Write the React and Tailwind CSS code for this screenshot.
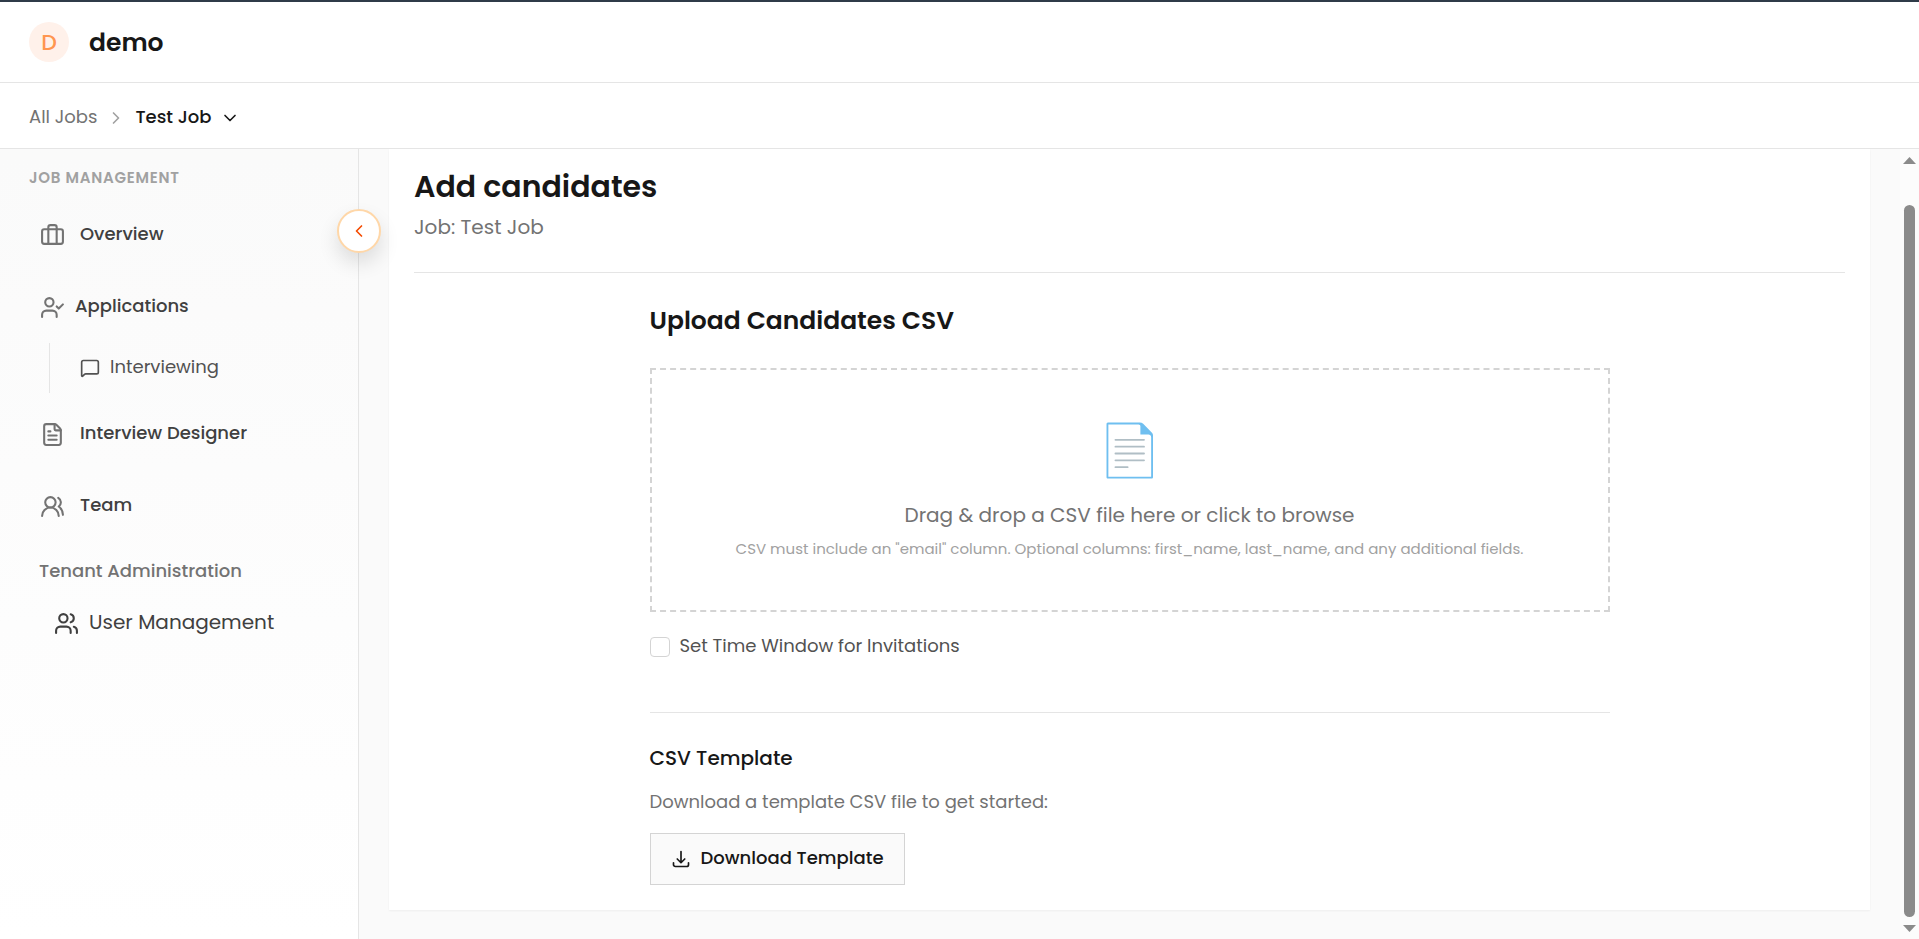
import {
  ChevronDown,
  ChevronLeft,
  ChevronRight,
  FileText,
  MessageSquare,
  UserCheck,
  Users,
  UsersRound,
} from "lucide-react";

function BriefcaseIcon() {
  return (
    <svg
      className="size-[25px] shrink-0 text-neutral-500"
      viewBox="0 0 24 24"
      fill="none"
      stroke="currentColor"
      strokeWidth="2"
      strokeLinecap="round"
      strokeLinejoin="round"
      aria-hidden="true"
    >
      <rect x="2" y="6" width="20" height="14" rx="2" />
      <path d="M16 20V4a2 2 0 0 0-2-2h-4a2 2 0 0 0-2 2v16" />
    </svg>
  );
}

function DownloadIcon() {
  return (
    <svg
      className="size-5 shrink-0"
      viewBox="0 0 24 24"
      fill="none"
      stroke="currentColor"
      strokeWidth="2"
      strokeLinecap="round"
      strokeLinejoin="round"
      aria-hidden="true"
    >
      <path d="M3 16.5v2.25A2.25 2.25 0 0 0 5.25 21h13.5A2.25 2.25 0 0 0 21 18.75V16.5M16.5 12 12 16.5m0 0L7.5 12m4.5 4.5V3" />
    </svg>
  );
}

function NavRow({ icon, children, className = "gap-[15px]" }) {
  return (
    <a href="#" className={`flex h-[52px] items-center pl-10 text-[18px] font-medium text-neutral-700 ${className}`}>
      {icon}
      <span className="pb-1">{children}</span>
    </a>
  );
}

const navIcon = "size-[25px] shrink-0 text-neutral-500";

function Header() {
  return (
    <header className="flex h-[81px] shrink-0 items-center gap-5 border-b border-neutral-200 bg-white px-[29px]">
      <div className="flex size-10 items-center justify-center rounded-full bg-[#fff1ea] text-[22px] font-medium text-[#ff9650]">
        D
      </div>
      <span className="pt-0.5 text-[25px] leading-8 font-semibold">demo</span>
    </header>
  );
}

function Breadcrumb() {
  return (
    <nav
      aria-label="Breadcrumb"
      className="flex h-[66px] shrink-0 items-center gap-[9px] border-b border-neutral-200 bg-white px-[29px] pt-1 text-[18px]"
    >
      <a href="#" className="pb-0.5 text-neutral-500">
        All Jobs
      </a>
      <ChevronRight className="size-5 text-neutral-400" strokeWidth={2} />
      <button type="button" className="flex items-center gap-2 font-medium">
        <span className="pb-0.5">Test Job</span>
        <ChevronDown className="size-5" strokeWidth={2} />
      </button>
    </nav>
  );
}

function Sidebar() {
  return (
    <aside className="relative z-10 w-[359px] shrink-0 border-r border-neutral-200 bg-linear-to-b from-neutral-50 to-white pt-[17px]">
      <h2 className="pl-[29px] text-[15px] leading-6 font-semibold tracking-wider text-neutral-400 uppercase">
        Job Management
      </h2>
      <nav aria-label="Job management" className="mt-[19px] flex flex-col gap-5">
        <NavRow icon={<BriefcaseIcon />}>Overview</NavRow>
        <div>
          <NavRow className="gap-[10px]" icon={<UserCheck className={navIcon} strokeWidth={2} />}>
            Applications
          </NavRow>
          <div className="mt-2.5 -mb-[5px] ml-[49px] border-l border-neutral-200">
            <a href="#" className="flex h-[50px] items-center gap-2.5 pl-[30px] text-[18px] text-neutral-600">
              <MessageSquare className="size-5" strokeWidth={2} />
              <span className="pb-1">Interviewing</span>
            </a>
          </div>
        </div>
        <NavRow icon={<FileText className={navIcon} strokeWidth={2} />}>Interview Designer</NavRow>
        <NavRow icon={<UsersRound className={navIcon} strokeWidth={2} />}>Team</NavRow>
      </nav>
      <h2 className="mt-[25px] pl-[39px] text-[18px] leading-7 font-medium text-neutral-500">
        Tenant Administration
      </h2>
      <nav aria-label="Tenant administration" className="mt-[14px]">
        <a href="#" className="flex h-12 items-center gap-[10px] pl-[54px] text-[20px] text-neutral-700">
          <Users className="size-[25px]" strokeWidth={2} />
          <span className="pb-0.5">User Management</span>
        </a>
      </nav>
      <button
        type="button"
        aria-label="Collapse sidebar"
        className="absolute top-[60px] -right-[23px] flex size-11 items-center justify-center rounded-full border-2 border-orange-200 bg-white text-orange-600 shadow-[0_10px_20px_rgba(0,0,0,0.12)]"
      >
        <ChevronLeft className="size-5" strokeWidth={2} />
      </button>
    </aside>
  );
}

function UploadSection() {
  return (
    <section className="mx-auto mt-7 max-w-[960px]">
      <h2 className="text-[25px] leading-10 font-semibold">Upload Candidates CSV</h2>
      <label className="mt-[27px] flex cursor-pointer flex-col items-center border-2 border-dashed border-neutral-300 pt-[50px] pb-[49px] text-center">
        <input type="file" accept=".csv" className="sr-only" />
        <span className="text-[51px] leading-[60px]" aria-hidden="true">
          📄
        </span>
        <span className="mt-[19px] text-[20px] leading-8 text-neutral-500">
          Drag &amp; drop a CSV file here or click to browse
        </span>
        <span className="mt-1.5 text-[15px] leading-6 text-neutral-400">
          CSV must include an "email" column. Optional columns: first_name, last_name, and any additional fields.
        </span>
      </label>
      <div className="mt-[21px] flex h-7 items-center gap-2.5 text-[18px]">
        <input
          id="time-window"
          type="checkbox"
          className="size-5 appearance-none rounded border border-neutral-300 bg-white checked:bg-orange-500"
        />
        <label htmlFor="time-window" className="pb-1 text-neutral-600">
          Set Time Window for Invitations
        </label>
      </div>
      <div className="mt-[51px] border-t border-neutral-200 pt-[29px]">
        <h3 className="text-[20px] leading-8 font-medium">CSV Template</h3>
        <p className="mt-[14px] text-[18px] leading-7 text-neutral-500">
          Download a template CSV file to get started:
        </p>
        <button
          type="button"
          className="mt-[17px] flex h-[52px] items-center gap-2.5 border border-neutral-300 bg-neutral-50 px-5 text-[18px] font-medium"
        >
          <DownloadIcon />
          <span className="pb-1">Download Template</span>
        </button>
      </div>
    </section>
  );
}

function ScrollRail() {
  return (
    <div aria-hidden="true" className="flex w-[19px] shrink-0 flex-col items-center bg-[#fcfcfc] pt-2 pb-[7px]">
      <svg className="h-[7px] w-[13px] fill-[#8b8b8b]" viewBox="0 0 13 7">
        <path d="M6.5 0 13 7H0z" />
      </svg>
      <div className="mt-[41px] mb-2 w-[11px] flex-1 rounded-full bg-[#8b8b8b]" />
      <svg className="h-[7px] w-[13px] fill-[#8b8b8b]" viewBox="0 0 13 7">
        <path d="M6.5 7 0 0h13z" />
      </svg>
    </div>
  );
}

export default function App() {
  return (
    <div className="flex h-screen flex-col overflow-hidden border-t-2 border-[#2f3b48] bg-white font-['Poppins','Inter',sans-serif] text-neutral-900">
      <Header />
      <Breadcrumb />
      <div className="flex min-h-0 flex-1">
        <Sidebar />
        <main className="min-w-0 flex-1 overflow-hidden bg-neutral-50 px-[30px]">
          <div className="bg-white px-[25px] pt-[18px] pb-[25px] shadow-xs">
            <div className="border-b border-neutral-200 pb-[30px]">
              <h1 className="text-[30px] leading-10 font-semibold">Add candidates</h1>
              <p className="mt-[5px] text-[20px] leading-[30px] text-neutral-500">Job: Test Job</p>
            </div>
            <UploadSection />
          </div>
        </main>
        <ScrollRail />
      </div>
    </div>
  );
}
